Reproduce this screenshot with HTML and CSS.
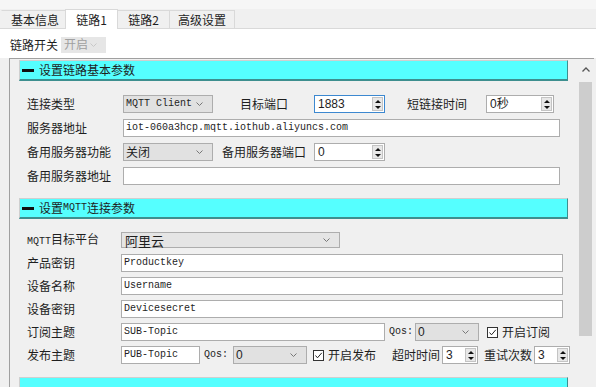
FILE: index.html
```html
<!DOCTYPE html>
<html>
<head>
<meta charset="utf-8">
<link rel="stylesheet" href="styles.css">
</head>
<body>
<div class="tabbar">
  <div class="tab t1">基本信息</div>
  <div class="tab t2 active">链路1</div>
  <div class="tab t3">链路2</div>
  <div class="tab t4">高级设置</div>
</div>
<div class="toppanel">
  <span class="lbl">链路开关</span>
  <div class="select disabled w-switch"><span class="val">开启</span><svg class="chev" width="7" height="4" viewBox="0 0 7 4"><polyline points="0.5,0.5 3.5,3.5 6.5,0.5" fill="none" stroke="#c8c8c8" stroke-width="1"/></svg></div>
</div>
<div class="frame">
  <div class="scrollarea">
    <div class="header"><span class="dash"></span>设置链路基本参数</div>
    <div class="sec sec1">
      <div class="row">
        <span class="lbl lw1">连接类型</span>
        <div class="select w90"><span class="val mono">MQTT Client</span><svg class="chev" width="7" height="4" viewBox="0 0 7 4"><polyline points="0.5,0.5 3.5,3.5 6.5,0.5" fill="none" stroke="#777" stroke-width="1"/></svg></div>
        <span class="lbl l-port">目标端口</span>
        <div class="spin focus w71"><span class="val">1883</span><div class="btns"><span class="up"></span><span class="dn"></span></div></div>
        <span class="lbl l-short">短链接时间</span>
        <div class="spin w68"><span class="val">0秒</span><div class="btns"><span class="up"></span><span class="dn"></span></div></div>
      </div>
      <div class="row">
        <span class="lbl lw1">服务器地址</span>
        <div class="input w437"><span class="val mono">iot-060a3hcp.mqtt.iothub.aliyuncs.com</span></div>
      </div>
      <div class="row">
        <span class="lbl lw1">备用服务器功能</span>
        <div class="select w90"><span class="val">关闭</span><svg class="chev" width="7" height="4" viewBox="0 0 7 4"><polyline points="0.5,0.5 3.5,3.5 6.5,0.5" fill="none" stroke="#777" stroke-width="1"/></svg></div>
        <span class="lbl l-bport">备用服务器端口</span>
        <div class="spin w71"><span class="val">0</span><div class="btns"><span class="up"></span><span class="dn"></span></div></div>
      </div>
      <div class="row">
        <span class="lbl lw1">备用服务器地址</span>
        <div class="input w437"></div>
      </div>
    </div>
    <div class="header"><span class="dash"></span>设置<span class="mono hm">MQTT</span>连接参数</div>
    <div class="sec sec2">
      <div class="row">
        <span class="lbl lw2"><span class="mono">MQTT</span>目标平台</span>
        <div class="select plat w219"><span class="val big">阿里云</span><svg class="chev" width="7" height="4" viewBox="0 0 7 4"><polyline points="0.5,0.5 3.5,3.5 6.5,0.5" fill="none" stroke="#777" stroke-width="1"/></svg></div>
      </div>
      <div class="row">
        <span class="lbl lw2">产品密钥</span>
        <div class="input w442"><span class="val mono">Productkey</span></div>
      </div>
      <div class="row">
        <span class="lbl lw2">设备名称</span>
        <div class="input w442"><span class="val mono">Username</span></div>
      </div>
      <div class="row">
        <span class="lbl lw2">设备密钥</span>
        <div class="input w442"><span class="val mono">Devicesecret</span></div>
      </div>
      <div class="row">
        <span class="lbl lw2">订阅主题</span>
        <div class="input w264"><span class="val mono">SUB-Topic</span></div>
        <span class="lbl mono qos q1">Qos:</span>
        <div class="select w64"><span class="val">0</span><svg class="chev" width="7" height="4" viewBox="0 0 7 4"><polyline points="0.5,0.5 3.5,3.5 6.5,0.5" fill="none" stroke="#777" stroke-width="1"/></svg></div>
        <label class="check c1"><span class="box"><svg width="9" height="9" viewBox="0 0 9 9"><polyline points="1.5,4.5 3.5,6.8 7.8,1.8" fill="none" stroke="#222" stroke-width="1"/></svg></span><span class="ctext">开启订阅</span></label>
      </div>
      <div class="row">
        <span class="lbl lw2">发布主题</span>
        <div class="input w79"><span class="val mono">PUB-Topic</span></div>
        <span class="lbl mono qos q2">Qos:</span>
        <div class="select w74"><span class="val">0</span><svg class="chev" width="7" height="4" viewBox="0 0 7 4"><polyline points="0.5,0.5 3.5,3.5 6.5,0.5" fill="none" stroke="#777" stroke-width="1"/></svg></div>
        <label class="check c2"><span class="box"><svg width="9" height="9" viewBox="0 0 9 9"><polyline points="1.5,4.5 3.5,6.8 7.8,1.8" fill="none" stroke="#222" stroke-width="1"/></svg></span><span class="ctext">开启发布</span></label>
        <span class="lbl l-timeout">超时时间</span>
        <div class="spin w36"><span class="val">3</span><div class="btns"><span class="up"></span><span class="dn"></span></div></div>
        <span class="lbl l-retry">重试次数</span>
        <div class="spin w36"><span class="val">3</span><div class="btns"><span class="up"></span><span class="dn"></span></div></div>
      </div>
    </div>
    <div class="header"></div>
  </div>
  <div class="scrollbar">
    <div class="sb-up"><svg width="8" height="5" viewBox="0 0 8 5"><polyline points="0.5,4.5 4,1 7.5,4.5" fill="none" stroke="#555" stroke-width="1.3"/></svg></div>
    <div class="sb-thumb"></div>
  </div>
</div>
</body>
</html>
```

FILE: styles.css
```css
* { box-sizing: border-box; }
html, body { margin: 0; padding: 0; }
body {
  width: 596px;
  height: 387px;
  overflow: hidden;
  background: #f0f0f0;
  font-family: "Noto Sans CJK SC", "Liberation Sans", sans-serif;
  font-size: 12px;
  color: #1e1e1e;
}
.mono { font-family: "Liberation Mono", "Noto Sans CJK SC", monospace; font-size: 10px; }

/* tabs */
.tabbar {
  display: flex;
  align-items: flex-end;
  height: 29px;
  padding-left: 2px;
  border-bottom: 1px solid #d9d9d9;
  background: linear-gradient(#f6f6f6 0, #f6f6f6 9px, #f0f0f0 9px);
}
.tab {
  height: 18px;
  display: flex;
  align-items: center;
  justify-content: center;
  border: 1px solid #d9d9d9;
  border-bottom: none;
  margin-left: -1px;
  background: #f0f0f0;
  line-height: 1;
}
.t1 { width: 65px; padding-left: 3px; border-left-color: transparent; }
.t2 { width: 53px; }
.t3 { width: 53px; }
.t4 { width: 66px; }
.tab.active {
  height: 20px;
  margin-bottom: -1px;
  background: #fff;
  position: relative;
  z-index: 1;
}

.toppanel {
  height: 29px;
  background: #fff;
  display: flex;
  align-items: center;
  padding-left: 10px;
  padding-top: 2px;
}
.toppanel .lbl { width: 51px; }

/* frame */
.frame {
  display: flex;
  margin-left: 9px;
  margin-right: 2px;
  height: 340px;
  border-top: 1px solid #a0a0a0;
  border-left: 1px solid #a0a0a0;
}
.scrollarea {
  flex: 1;
  padding: 1px 9px 0 9px;
  overflow: hidden;
}
.header {
  height: 21px;
  flex: none;
  background: #55ffff;
  border-top: 1px solid #cfcfcf;
  border-left: 1px solid #cfcfcf;
  border-right: 1px solid #3d8f8f;
  border-bottom: 2px solid #3d8f8f;
  display: flex;
  align-items: center;
  padding-left: 2px;
  line-height: 1;
}
.dash {
  display: inline-block;
  width: 12px;
  height: 3px;
  background: #111;
  margin-right: 5px;
}
.hm { font-size: 10px; }

.sec { display: flex; flex-direction: column; padding-left: 8px; }
.sec1 { padding-top: 14px; padding-bottom: 13px; gap: 6px; }
.sec2 { padding-top: 12px; padding-bottom: 13px; gap: 5px; }
.row { display: flex; align-items: center; height: 18px; }
.lbl { white-space: nowrap; line-height: 1; flex: none; }
.lw1 { width: 96px; }
.lw2 { width: 94px; }

/* controls */
.input, .select, .spin {
  height: 18px;
  flex: none;
  display: flex;
  align-items: center;
  border: 1px solid #adadad;
  background: #fff;
  line-height: 1;
}
.val { padding-left: 2px; white-space: nowrap; flex: 1; }
.select { background: #e1e1e1; padding-right: 9px; }
.select .chev { flex: none; }
.select.disabled { background: #e6e6e6; border-color: #e6e6e6; color: #a0a0a0; height: 16px; }
.select.plat { background: #e5e5e5; height: 16px; }
.big { font-size: 13px; padding-left: 3px; }
.w-switch { width: 45px; padding-right: 8px; }
.spin .val { padding-left: 3px; font-family: "Liberation Sans", "Noto Sans CJK SC", sans-serif; }
.spin.focus { border-color: #3c88d0; }
.btns {
  width: 11px;
  height: 14px;
  margin-right: 1px;
  display: flex;
  flex-direction: column;
  align-items: center;
  justify-content: space-around;
  background: #e8e8e8;
  border: 1px solid #c4c4c4;
}
.up, .dn { width: 0; height: 0; border-left: 3px solid transparent; border-right: 3px solid transparent; }
.up { border-bottom: 3px solid #111; }
.dn { border-top: 3px solid #111; }

.w90 { width: 90px; }
.w71 { width: 71px; }
.w68 { width: 68px; }
.w437 { width: 437px; }
.w219 { width: 219px; }
.w442 { width: 442px; }
.w264 { width: 264px; }
.w64 { width: 64px; }
.w79 { width: 79px; }
.w74 { width: 74px; }
.w36 { width: 36px; }

.select .val { font-family: "Liberation Sans", "Noto Sans CJK SC", sans-serif; }
.select .val.mono { font-family: "Liberation Mono", monospace; font-size: 10px; }
.select .val.big { font-family: "Noto Sans CJK SC", sans-serif; }
.w90 .val:not(.mono) { font-family: "Noto Sans CJK SC", sans-serif; }

.l-port { margin-left: 27px; width: 74px; }
.l-short { margin-left: 22px; width: 79px; }
.l-bport { margin-left: 9px; width: 92px; }
.qos { width: 30px; padding-left: 4px; }
.q2 { width: 33px; }
.l-timeout { margin-left: 16px; width: 50px; }
.l-retry { margin-left: 6px; width: 50px; }

.check { display: flex; align-items: center; flex: none; line-height: 1; }
.c1 { margin-left: 8px; }
.c2 { margin-left: 6px; }
.box {
  width: 11px;
  height: 11px;
  border: 1px solid #333;
  background: #fff;
  display: flex;
  align-items: center;
  justify-content: center;
  margin-right: 4px;
}
.ctext { font-size: 12px; }

/* scrollbar */
.scrollbar {
  width: 17px;
  flex: none;
  background: #f0f0f0;
  display: flex;
  flex-direction: column;
  align-items: center;
}
.sb-up { height: 21px; width: 17px; display: flex; align-items: center; justify-content: center; }
.sb-thumb { width: 13px; height: 254px; background: #cdcdcd; margin-top: 2px; }
```
